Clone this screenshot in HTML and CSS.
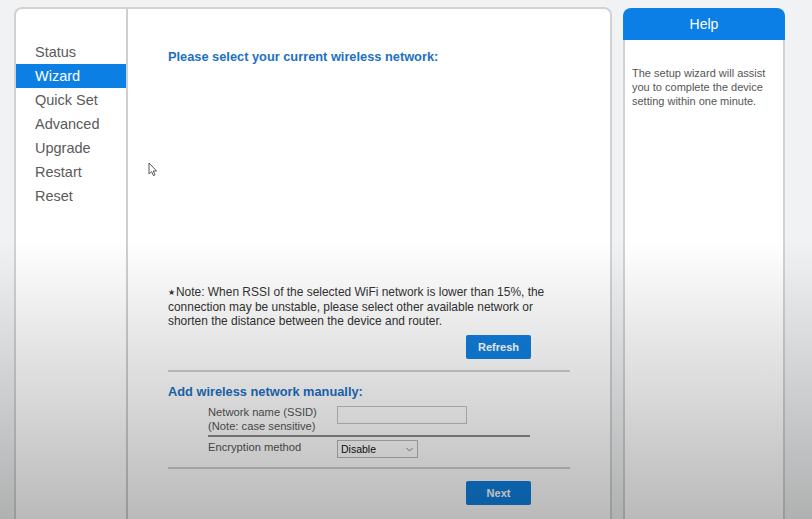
FILE: index.html
```html
<!DOCTYPE html>
<html>
<head>
<meta charset="utf-8">
<link rel="stylesheet" href="styles.css">
</head>
<body>
<div class="page">
  <div class="card">
    <nav class="sidebar">
      <div class="nav-item">Status</div>
      <div class="nav-item active">Wizard</div>
      <div class="nav-item">Quick Set</div>
      <div class="nav-item">Advanced</div>
      <div class="nav-item">Upgrade</div>
      <div class="nav-item">Restart</div>
      <div class="nav-item">Reset</div>
    </nav>
    <main class="content">
      <h2 class="title">Please select your current wireless network:</h2>
      <div class="list"></div>
      <p class="note"><span class="star">★</span>Note: When RSSI of the selected WiFi network is lower than 15%, the<br>connection may be unstable, please select other available network or<br>shorten the distance between the device and router.</p>
      <div class="btn-row"><button class="btn">Refresh</button></div>
      <div class="rule"></div>
      <h2 class="title title-manual">Add wireless network manually:</h2>
      <div class="form">
        <div class="form-row">
          <div class="label">Network name (SSID)<br>(Note: case sensitive)</div>
          <div class="input"></div>
        </div>
        <div class="form-divider"></div>
        <div class="form-row row-enc">
          <div class="label">Encryption method</div>
          <div class="select"><span>Disable</span>
            <svg class="chev" width="7" height="5" viewBox="0 0 7 5"><path d="M0.5 1 L3.5 4 L6.5 1" fill="none" stroke="#888" stroke-width="1"/></svg>
          </div>
        </div>
      </div>
      <div class="rule rule-bottom"></div>
      <div class="btn-row btn-row-next"><button class="btn">Next</button></div>
      <svg class="cursor" width="10" height="15" viewBox="0 0 10 15"><path d="M1 1 L1 12 L3.6 9.6 L5.4 13.6 L7 12.9 L5.3 9 L8.6 9 Z" fill="#fff" stroke="#555" stroke-width="1" stroke-linejoin="round"/></svg>
    </main>
  </div>
  <aside class="help">
    <div class="help-head">Help</div>
    <div class="help-body">The setup wizard will assist you to complete the device setting within one minute.</div>
  </aside>
</div>
<div class="shade"></div>
</body>
</html>
```
FILE: styles.css
```css
* { box-sizing: border-box; }
html, body { margin: 0; padding: 0; }
body {
  background: #f1f2f3;
  font-family: "Liberation Sans", Arial, sans-serif;
  width: 812px;
  height: 519px;
  overflow: hidden;
  position: relative;
}
.page {
  display: flex;
  gap: 11px;
  padding: 7px 0 0 14px;
}
.card {
  width: 598px;
  height: 512px;
  border: 2px solid #d2d2d2;
  border-bottom: 0;
  border-radius: 8px 8px 0 0;
  background: #fff;
  display: flex;
  overflow: hidden;
}
.sidebar {
  width: 112px;
  flex: none;
  border-right: 2px solid #cfcfcf;
  padding-top: 31px;
}
.nav-item {
  height: 24px;
  line-height: 24px;
  font-size: 14.5px;
  color: #5a5a5a;
  padding-left: 19px;
}
.nav-item.active {
  background: #0c7fe4;
  color: #fff;
  margin-left: -1px;
  padding-left: 20px;
}
.content {
  flex: 1;
  padding: 40px 40px 0 40px;
  position: relative;
}
.title {
  margin: 0;
  font-size: 12.8px;
  line-height: 16px;
  font-weight: bold;
  color: #1c70c4;
}
.list { height: 220px; }
.note {
  margin: 0;
  font-size: 11.95px;
  line-height: 14px;
  color: #333;
  white-space: nowrap;
}
.star { font-size: 8px; vertical-align: 1px; margin-right: 1px; }
.btn-row {
  display: flex;
  justify-content: flex-end;
  padding-right: 39px;
  margin-top: 7px;
}
.btn {
  width: 65px;
  height: 24px;
  border: none;
  border-radius: 2px;
  background: #0f7fdd;
  color: #fff;
  font-family: "Liberation Sans", Arial, sans-serif;
  font-size: 11px;
  font-weight: bold;
  padding: 0;
}
.rule {
  height: 2px;
  background: #cfcfcf;
  margin-top: 11px;
}
.title-manual { margin-top: 12px; font-size: 12.8px; }
.form { padding-left: 40px; margin-top: 5px; }
.form-row {
  display: flex;
  align-items: flex-start;
}
.label {
  width: 129px;
  font-size: 11.2px;
  line-height: 14px;
  color: #555;
  white-space: nowrap;
}
.input {
  width: 130px;
  height: 18px;
  margin-top: 1px;
  border: 1px solid #c4c4c4;
  background: #fff;
}
.form-divider {
  width: 322px;
  height: 2px;
  background: #8a8a8a;
  margin-top: 2px;
}
.row-enc { padding-top: 3px; }
.select {
  width: 81px;
  height: 18px;
  border: 1px solid #b8b8b8;
  background: #fff;
  display: flex;
  align-items: center;
  justify-content: space-between;
  padding: 0 4px 0 3px;
  font-size: 10.5px;
  color: #111;
}
.chev { display: block; }
.rule-bottom { margin-top: 9px; }
.btn-row-next { margin-top: 12px; }
.cursor {
  position: absolute;
  left: 20px;
  top: 153px;
}
.help {
  width: 162px;
  flex: none;
}
.help-head {
  height: 32px;
  margin-top: 1px;
  background: #0c7fe6;
  border-radius: 8px 8px 0 0;
  color: #fff;
  font-size: 14px;
  line-height: 32px;
  text-align: center;
}
.help-body {
  height: 479px;
  background: #fff;
  border-left: 2px solid #d2d2d2;
  border-right: 2px solid #d2d2d2;
  padding: 26px 7px 0 7px;
  font-size: 11px;
  line-height: 14px;
  color: #555;
}
.shade {
  position: absolute;
  inset: 0;
  pointer-events: none;
  background: linear-gradient(to bottom, rgba(0,0,0,0) 240px, rgba(0,0,0,0.27) 519px);
}
```
